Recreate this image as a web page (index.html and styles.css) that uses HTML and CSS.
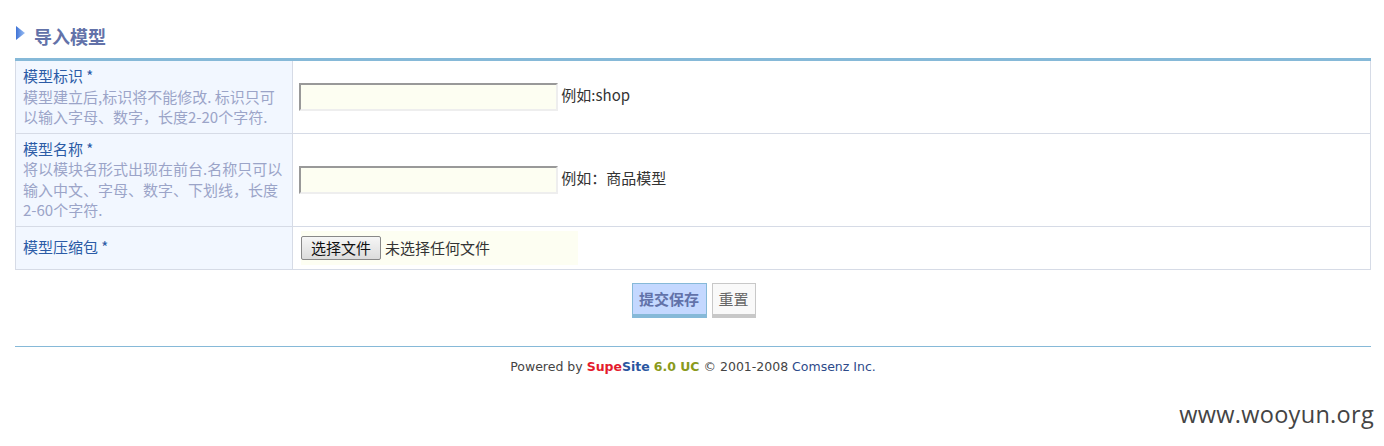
FILE: index.html
```html
<!DOCTYPE html>
<html lang="zh-CN">
<head>
<meta charset="utf-8">
<title>导入模型</title>
<link rel="stylesheet" href="styles.css">
</head>
<body>
<div class="page">
  <h2 class="title"><span class="arrow"><svg width="9" height="14" viewBox="0 0 9 14"><defs><linearGradient id="g" x1="0" y1="0" x2="1" y2="0"><stop offset="0" stop-color="#3f73d6"/><stop offset="1" stop-color="#9cc0f4"/></linearGradient></defs><path d="M0 0 L9 7 L0 14 Z" fill="url(#g)"/></svg></span>导入模型</h2>
  <table class="form">
    <tr class="r1">
      <th><span class="lbl">模型标识 *</span><br><span class="desc">模型建立后,标识将不能修改. 标识只可以输入字母、数字，长度2-20个字符.</span></th>
      <td><input type="text" class="txt"> 例如:shop</td>
    </tr>
    <tr class="r2">
      <th><span class="lbl">模型名称 *</span><br><span class="desc">将以模块名形式出现在前台.名称只可以输入中文、字母、数字、下划线，长度2-60个字符.</span></th>
      <td><input type="text" class="txt"> 例如：商品模型</td>
    </tr>
    <tr class="r3">
      <th><span class="lbl">模型压缩包 *</span></th>
      <td><span class="file"><span class="fbtn">选择文件</span><span class="fname">未选择任何文件</span></span></td>
    </tr>
  </table>
  <div class="btns">
    <button class="submit">提交保存</button>
    <button class="reset">重置</button>
  </div>
  <div class="footer">Powered by <b class="supe">Supe</b><b class="site">Site</b> <b class="ver">6.0 UC</b> © 2001-2008 <span class="cz">Comsenz Inc.</span></div>
</div>
<div class="mark">www.wooyun.org</div>
</body>
</html>
```
FILE: styles.css
```css
html, body { margin: 0; padding: 0; background: #fff; }
body { font-family: "Noto Sans CJK SC", "Noto Sans", sans-serif; font-size: 15px; color: #333; height: 446px; position: relative; overflow: hidden; }
.page { margin: 0 13px 0 15px; padding-top: 22px; }
.title { position: relative; top: -4px; margin: 0; height: 36px; display: flex; align-items: center; font-size: 18px; font-weight: bold; color: #6272a9; line-height: 28px; }
.title .arrow { display: inline-flex; width: 18px; margin-left: 1px; position: relative; top: -3px; }
.form { width: 100%; border-collapse: collapse; border: 1px solid #d6dbe6; border-top: 3px solid #86b9d8; }
.form th { width: 262px; background: #f2f7ff; text-align: left; font-weight: normal; padding: 5px 7px; border: 1px solid #d6dbe6; vertical-align: middle; line-height: 20.5px; }
.form td { border: 1px solid #d6dbe6; padding: 0 6px; vertical-align: middle; color: #333; }
.r1 th { height: 61px; }
.r2 th { height: 82px; }
.r3 th { height: 34px; padding-top: 4px; padding-bottom: 4px; }
.lbl { color: #2b5ba6; }
.desc { color: #9ba4c8; }
.txt { width: 259px; height: 28px; box-sizing: border-box; border: 2px solid; border-color: #999 #eee #eee #999; background: #fdfef2; vertical-align: middle; margin: 0; padding: 0; }
.file { display: inline-flex; align-items: center; width: 277px; height: 34px; background: #fdfef2; margin-left: 2px; }
.fbtn { display: inline-block; box-sizing: border-box; width: 80px; height: 24px; border: 1px solid #888; border-radius: 2px; background: linear-gradient(#f6f6f6, #dcdcdc); color: #111; text-align: center; line-height: 22px; font-size: 15px; }
.fname { margin-left: 4px; color: #333; }
.btns { display: flex; justify-content: center; gap: 5px; margin-top: 13px; padding-left: 1px; }
.btns button { font-family: "Noto Sans CJK SC", sans-serif; font-size: 15px; height: 35px; box-sizing: border-box; padding: 0; cursor: pointer; line-height: 26px; }
.submit { width: 75px; background: #c4d8ff; border: 1px solid #86b9d8; border-bottom: 4px solid #86b9d8; color: #6272a9; font-weight: bold; }
.reset { width: 44px; background: #f9f9f9; border: 1px solid #c8c8c8; border-bottom: 4px solid #c8c8c8; color: #666; }
.footer { margin-top: 28px; border-top: 1px solid #86b9d8; padding-top: 12px; text-align: center; font-family: "DejaVu Sans", Verdana, sans-serif; font-size: 12.5px; color: #444; }
.supe { color: #e41b2d; }
.site { color: #2a55a0; }
.ver { color: #8a9a1b; }
.cz { color: #2c4a8a; }
.mark { position: absolute; right: 10px; top: 398px; font-family: "Open Sans", sans-serif; font-size: 23.5px; color: #444; letter-spacing: 0.3px; }
```
